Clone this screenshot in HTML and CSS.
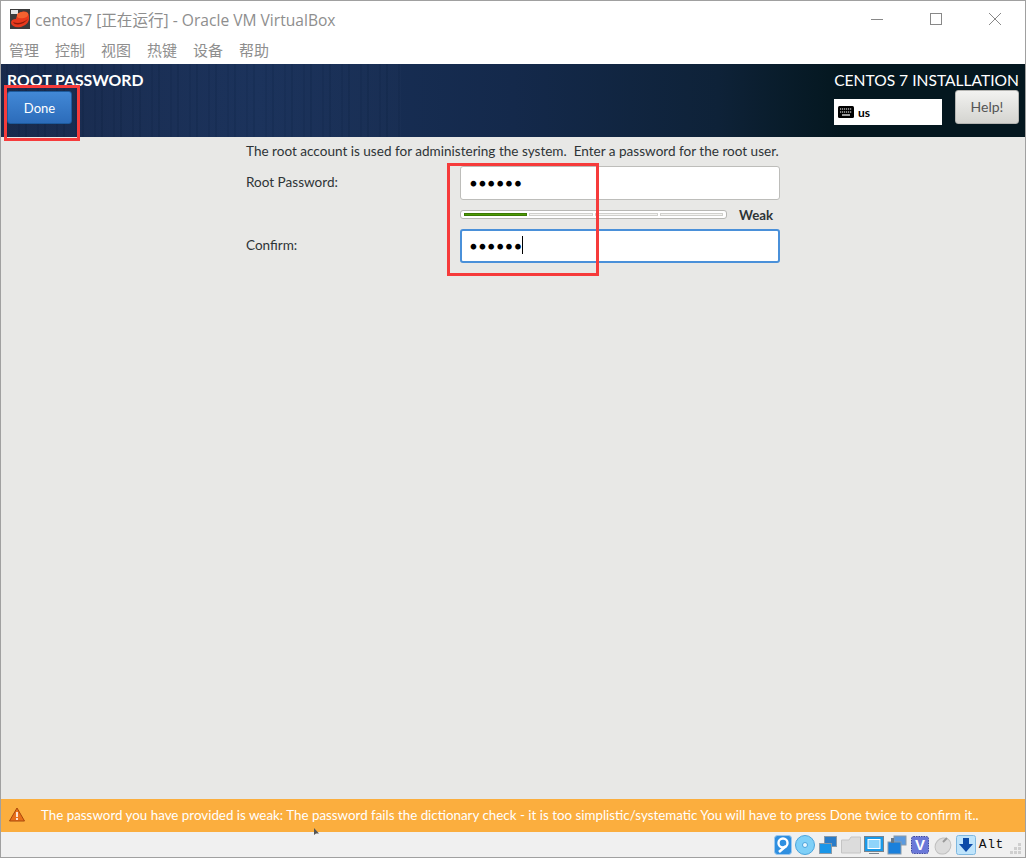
FILE: index.html
```html
<!DOCTYPE html>
<html lang="en">
<head>
    <meta charset="UTF-8">
    <title>centos7 [正在运行] - Oracle VM VirtualBox</title>
    <link rel="stylesheet" href="styles.css">
</head>
<body>
<div class="window">
    <div class="titlebar">
        <svg class="app_icon" width="20" height="20" viewBox="0 0 20 20">
            <rect width="20" height="20" fill="#3b3b3b"/>
            <rect x="1" y="1" width="7" height="4" fill="#e6e6e6"/>
            <path d="M1 14 Q1 10 6 10 Q7 3 13 2.5 Q19 2 19 8 Q20 15 11 18 Q2 19 1 14Z" fill="#e8391c"/>
            <path d="M7 5 Q13 1 18 4 Q19 8 14 9 Q9 10 7 8Z" fill="#f4622f"/>
            <path d="M3 13 Q10 16 18 10 Q14 15 8 15.5 Q4 15.5 3 13Z" fill="#8e1c0c"/>
        </svg>
        <span class="title">centos7 [正在运行] - Oracle VM VirtualBox</span>
        <div class="win_btns">
            <svg width="14" height="14" viewBox="0 0 14 14"><path d="M1 7.5H13" stroke="#888" fill="none"/></svg>
            <svg width="14" height="14" viewBox="0 0 14 14"><rect x="1.5" y="1.5" width="11" height="11" stroke="#888" fill="none"/></svg>
            <svg width="14" height="14" viewBox="0 0 14 14"><path d="M1 1L13 13M13 1L1 13" stroke="#888" fill="none"/></svg>
        </div>
    </div>
    <div class="menubar">
        <span>管理</span><span>控制</span><span>视图</span><span>热键</span><span>设备</span><span>帮助</span>
    </div>
    <div class="vm_screen">
        <div class="header">
            <div class="header_left">
                <div class="spoke_title">ROOT PASSWORD</div>
                <button class="done_btn">Done</button>
            </div>
            <div class="header_right">
                <div class="product">CENTOS 7 INSTALLATION</div>
                <div class="header_controls">
                    <div class="kb_layout">
                        <svg width="16" height="12" viewBox="0 0 16 12">
                            <rect width="16" height="12" rx="1.5" fill="#000"/>
                            <path d="M2 3H14M2 6H14" stroke="#fff" stroke-width="1.2" stroke-dasharray="1.2 .8"/>
                            <path d="M4 9H12" stroke="#fff" stroke-width="1.2"/>
                        </svg>
                        <b>us</b>
                    </div>
                    <button class="help_btn">Help!</button>
                </div>
            </div>
        </div>
        <div class="content">
            <div class="form">
                <div class="intro">The root account is used for administering the system.&nbsp; Enter a password for the root user.</div>
                <div class="form_row">
                    <label>Root Password:</label>
                    <div class="pw_input">●●●●●●</div>
                </div>
                <div class="strength_row">
                    <div class="strength">
                        <span class="seg seg_on"></span><span class="seg"></span><span class="seg"></span><span class="seg"></span>
                    </div>
                    <b>Weak</b>
                </div>
                <div class="form_row">
                    <label>Confirm:</label>
                    <div class="pw_input pw_focus">●●●●●●<i class="caret"></i></div>
                </div>
            </div>
        </div>
        <div class="warning">
            <svg width="16" height="15" viewBox="0 0 16 15">
                <path d="M8 1L15.5 14H.5Z" fill="#e8701a" stroke="#a8480c" stroke-linejoin="round"/>
                <path d="M8 5V10M8 11V13" stroke="#fff" stroke-width="1.6"/>
            </svg>
            <span>The password you have provided is weak: The password fails the dictionary check - it is too simplistic/systematic You will have to press Done twice to confirm it..</span>
        </div>
    </div>
    <div class="statusbar">
        <svg width="18" height="20" viewBox="0 0 18 20"><rect x=".5" y=".5" width="17" height="19" rx="3" fill="#2f8fe0" stroke="#9cc8ee"/><circle cx="9" cy="8" r="4.5" fill="none" stroke="#fff" stroke-width="2.4"/><path d="M12 11L5 17" stroke="#fff" stroke-width="2.6"/></svg>
        <svg width="20" height="20" viewBox="0 0 20 20"><circle cx="10" cy="10" r="9.5" fill="#7fd0f8" stroke="#4aa4dc"/><circle cx="10" cy="10" r="2.5" fill="#e8f6fe" stroke="#4aa4dc"/></svg>
        <svg width="20" height="20" viewBox="0 0 20 20"><rect x="6.5" y="1.5" width="12" height="10" fill="#2a7cc8" stroke="#8a9aa8"/><rect x="1.5" y="8.5" width="12" height="10" fill="#1a96e8" stroke="#8a9aa8"/></svg>
        <svg width="20" height="18" viewBox="0 0 20 18"><path d="M.5 4H8L10 1H19.5V17H.5Z" fill="#dcdcdc" stroke="#c4c4c4"/></svg>
        <svg width="20" height="20" viewBox="0 0 20 20"><rect x=".5" y="1.5" width="19" height="15" fill="#1a9ae8" stroke="#77838e"/><rect x="4" y="4.5" width="12" height="9" fill="#8fd4fa" stroke="#fff"/><path d="M5 18.5H15" stroke="#77838e"/></svg>
        <svg width="20" height="20" viewBox="0 0 20 20"><rect x="7" y="1" width="12" height="9" fill="#5a9ae0" stroke="#8a9aa8"/><rect x="1" y="7" width="13" height="12" fill="#1a80dc" stroke="#8a9aa8"/><rect x="4" y="3" width="3" height="5" fill="#6a7a8a"/></svg>
        <svg width="20" height="20" viewBox="0 0 20 20"><rect x="1.5" y="1.5" width="17" height="17" rx="2" fill="#6a78d8" stroke="#3c46a0" stroke-dasharray="1.5 1"/><text class="v_mark" x="10" y="15" text-anchor="middle">V</text></svg>
        <svg width="20" height="20" viewBox="0 0 20 20"><ellipse cx="10" cy="11" rx="7.5" ry="8.5" transform="rotate(40 10 11)" fill="#dcdcdc" stroke="#c0c0c0"/><path d="M10 7L14 3" stroke="#999" stroke-width="2"/></svg>
        <svg width="20" height="20" viewBox="0 0 20 20"><rect x=".5" y=".5" width="19" height="19" rx="2" fill="#bfe4fb" stroke="#7fb8e0"/><path d="M7 3H13V9H17L10 17L3 9H7Z" fill="#0b4aa8"/></svg>
        <span class="host_key">Alt</span>
        <svg class="grip" width="12" height="12" viewBox="0 0 12 12">
            <path d="M8 0h3v3H8zM4 4h3v3H4zM8 4h3v3H8zM0 8h3v3H0zM4 8h3v3H4zM8 8h3v3H8z" fill="#cfcfcf"/>
        </svg>
    </div>
    <svg class="cursor_mark" width="6" height="8" viewBox="0 0 6 8"><path d="M1 0V7L3 5.5H6Z" fill="#555"/></svg>
    <div class="mark mark_done"></div>
    <div class="mark mark_pw"></div>
</div>
</body>
</html>
```
FILE: styles.css
```css
* {
    box-sizing: border-box;
    margin: 0;
    padding: 0;
}
body {
    width: 1026px;
    height: 858px;
    overflow: hidden;
    background: #fff;
    font-family: 'Lato', 'Noto Sans CJK SC', sans-serif;
}
.window {
    position: relative;
    height: 858px;
    display: flex;
    flex-direction: column;
    border: 1px solid #a0a0a0;
}
.titlebar {
    height: 36px;
    display: flex;
    align-items: center;
    padding-left: 9px;
    background: #fff;
}
.app_icon {
    margin-right: 5px;
}
.title {
    font-size: 15.6px;
    color: #8e8e8e;
    font-family: 'Open Sans', 'Noto Sans CJK SC', sans-serif;
}
.win_btns {
    margin-left: auto;
    display: flex;
    gap: 45px;
    padding-right: 23px;
}
.menubar {
    height: 27px;
    display: flex;
    gap: 16px;
    padding: 3px 0 0 8px;
    font-size: 15px;
    line-height: 21px;
    color: #8e8e8e;
    background: #fff;
}
.vm_screen {
    flex: 1;
    display: flex;
    flex-direction: column;
}
.header {
    height: 73px;
    padding: 7px 6px 0 6px;
    display: flex;
    justify-content: space-between;
    color: #fff;
    background:
        repeating-linear-gradient(90deg, rgba(255, 255, 255, .012) 0 5px, rgba(0, 0, 0, .035) 5px 7px, rgba(255, 255, 255, .012) 7px 17px, rgba(0, 0, 0, .02) 17px 19px) 0 0 / 400px 100% no-repeat,
        linear-gradient(90deg, #16284a 0%, #19315a 25%, #14294b 50%, #0e2238 70%, #04171f 82%, #04171f 100%);
}
.spoke_title {
    font-size: 15.8px;
    font-weight: 700;
    line-height: 17px;
}
.done_btn {
    display: block;
    width: 65px;
    height: 33px;
    margin-top: 3px;
    color: #fff;
    font-family: 'Lato', sans-serif;
    font-size: 13px;
    border: 1px solid #1d5a9c;
    border-radius: 3px;
    background: linear-gradient(#4288d6, #2c6cba);
}
.header_right {
    display: flex;
    flex-direction: column;
    align-items: flex-end;
}
.product {
    font-size: 15.6px;
    line-height: 17px;
    margin-top: 1px;
}
.header_controls {
    display: flex;
    gap: 13px;
    margin-top: 1px;
}
.kb_layout {
    width: 108px;
    height: 26px;
    margin-top: 9px;
    display: flex;
    align-items: center;
    gap: 4px;
    padding-left: 4px;
    background: #fff;
    color: #000;
    font-size: 12px;
}
.help_btn {
    width: 64px;
    height: 34px;
    padding-bottom: 1px;
    color: #555;
    font-family: 'Lato', sans-serif;
    font-size: 14px;
    border: 1px solid #b5b5b2;
    border-radius: 3px;
    background: linear-gradient(#f2f2f0, #d4d4d0);
}
.content {
    flex: 1;
    background: #e8e8e6;
    display: flex;
    justify-content: center;
}
.form {
    width: 534px;
    padding-top: 6px;
    font-size: 13.55px;
    color: #2e3436;
}
.intro {
    line-height: 17px;
    margin-bottom: 6px;
}
.form_row {
    display: flex;
    align-items: center;
}
.form_row label {
    width: 214px;
    padding-bottom: 2px;
}
.pw_input {
    width: 320px;
    height: 34px;
    display: flex;
    align-items: center;
    padding: 0 0 2px 9px;
    font-size: 11.5px;
    letter-spacing: 2px;
    color: #000;
    background: #fff;
    border: 1px solid #bdbdba;
    border-radius: 3px;
}
.pw_focus {
    border: 2px solid #4a90d9;
    padding-left: 8px;
}
.caret {
    width: 1px;
    height: 18px;
    margin-left: -1px;
    background: #000;
}
.strength_row {
    height: 29px;
    display: flex;
    align-items: center;
    padding-left: 214px;
}
.strength_row b {
    margin-left: 12px;
    font-size: 13.3px;
    color: #2e3436;
}
.strength {
    width: 267px;
    height: 9px;
    display: flex;
    gap: 2px;
    padding: 2px 3px;
    background: #fff;
    border: 1px solid #b8b8b4;
    border-radius: 3px;
}
.seg {
    flex: 1;
    background: #f4f4f2;
    border: 1px solid #d0d0cc;
}
.seg_on {
    background: #4e9a06;
    border-color: #3c7a04;
}
.warning {
    height: 33px;
    display: flex;
    align-items: center;
    gap: 16px;
    padding: 0 0 2px 8px;
    font-size: 13.37px;
    color: #fff;
    background: #fbae3e;
}
.statusbar {
    height: 25px;
    display: flex;
    justify-content: flex-end;
    align-items: center;
    gap: 3px;
    padding-right: 3px;
    background: #f0f0f0;
}
.v_mark {
    font-family: 'Liberation Sans', sans-serif;
    font-size: 15px;
    font-weight: 700;
    fill: #fff;
}
.host_key {
    font-family: 'Liberation Mono', monospace;
    font-size: 13px;
    letter-spacing: .6px;
    color: #111;
}
.grip {
    margin: 8px 0 0 3px;
}
.cursor_mark {
    position: absolute;
    left: 312px;
    top: 827px;
}
/* red boxes drawn over the shot */
.mark {
    position: absolute;
    border: 3px solid #f63b3b;
}
.mark_done {
    left: 3px;
    top: 84px;
    width: 76px;
    height: 56px;
}
.mark_pw {
    left: 446px;
    top: 162px;
    width: 152px;
    height: 113px;
}
```
